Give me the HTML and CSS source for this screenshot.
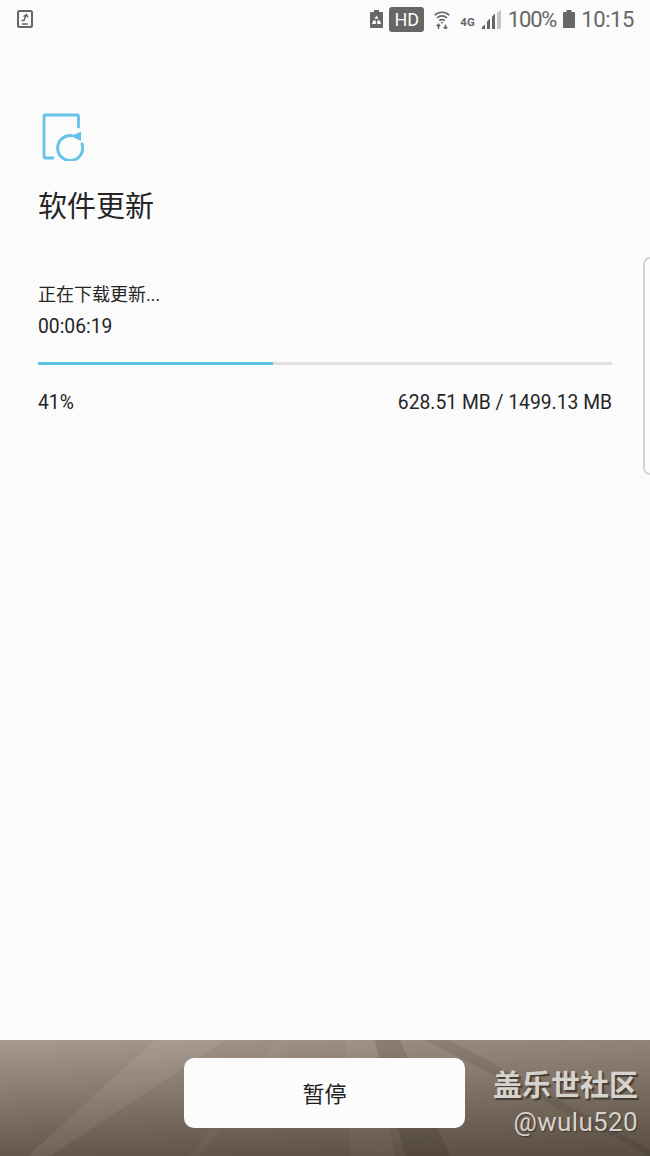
FILE: index.html
```html
<!DOCTYPE html>
<html lang="zh-CN">
<head>
  <meta charset="UTF-8">
  <title>软件更新</title>
  <link rel="stylesheet" href="styles.css">
</head>
<body>

<header class="status">
  <svg class="ic-phone" width="16" height="18" viewBox="0 0 16 18">
    <rect x="1" y="1" width="14" height="16" rx="1.5" fill="none" stroke="#666" stroke-width="2"/>
    <path d="M4.500 10.500h2.500L9 5M6.500 6.500L9.500 4.500l1.500 3" fill="none" stroke="#666" stroke-width="1.500"/>
    <path d="M5 14h6" stroke="#666" stroke-width="1.500"/>
  </svg>
  <div class="status-right">
    <svg width="13" height="18" viewBox="0 0 13 18">
      <path d="M4 0h5v2h3a1 1 0 0 1 1 1v14a1 1 0 0 1-1 1H1a1 1 0 0 1-1-1V3a1 1 0 0 1 1-1h3z" fill="#666"/>
      <path d="M6.500 5.500l2 3.200H4.500zM3.200 10.500h2.600v3.500H2zM9.800 10.500l1.200 3.500H7.200v-3.500z" fill="#fff"/>
    </svg>
    <span class="hd">HD</span>
    <svg class="ic-wifi" width="16" height="19" viewBox="0 0 16 19">
      <path d="M.7 5.200a10.500 10.500 0 0 1 14.600 0M3 8a7 7 0 0 1 10 0M5.300 10.700a3.800 3.800 0 0 1 5.400 0" fill="none" stroke="#666" stroke-width="1.700"/>
      <path d="M6.500 12h3L8 13.800z" fill="#666"/>
      <path d="M4.500 19v-4M2.800 16.300l1.700-2 1.700 2M11.500 14.500v4M9.800 17l1.700 2 1.700-2" fill="none" stroke="#666" stroke-width="1.400"/>
    </svg>
    <span class="net">4G</span>
    <svg class="ic-signal" width="19" height="19" viewBox="0 0 19 19">
      <path d="M0 19v-2l3-2.500V19zM5 19v-7.500l3-3V19zM10 19V6.500l3-3V19z" fill="#666"/>
      <path d="M15 19V2.500L19 0V19z" fill="#c4c4c4"/>
    </svg>
    <span class="pct">100%</span>
    <svg class="ic-batt" width="12" height="18" viewBox="0 0 12 18">
      <path d="M3.500 0h5v2H11a1 1 0 0 1 1 1v14a1 1 0 0 1-1 1H1a1 1 0 0 1-1-1V3a1 1 0 0 1 1-1h2.500z" fill="#666"/>
    </svg>
    <span class="clock">10:15</span>
  </div>
</header>

<main class="content">
  <svg class="update-icon" width="42" height="48" viewBox="0 0 42 48">
    <path d="M36.500 14V3a1 1 0 0 0-1-1H3a1 1 0 0 0-1 1v41a1 1 0 0 0 1 1h8" fill="none" stroke="#64c3e6" stroke-width="2.800" stroke-linecap="round"/>
    <path d="M30 22.700A12.500 12.500 0 1 0 40 31" fill="none" stroke="#64c3e6" stroke-width="3" stroke-linecap="round"/>
    <path d="M29 23l10-4.500v9.500z" fill="#64c3e6"/>
  </svg>
  <h1>软件更新</h1>

  <p class="state">正在下载更新...</p>
  <p class="timer">00:06:19</p>

  <div class="progress"><div class="progress-fill" style="width: 41%"></div></div>

  <div class="progress-info">
    <span>41%</span>
    <span>628.51 MB / 1499.13 MB</span>
  </div>
</main>

<div class="edge-handle"></div>

<footer class="bottom">
  <svg class="rays" width="650" height="116" viewBox="0 0 650 116">
    <polygon points="155,0 225,0 50,116 28,116" fill="#fff" opacity=".07"/>
    <polygon points="275,0 290,0 200,116 190,116" fill="#fff" opacity=".03"/>
    <polygon points="375,0 400,0 450,116 405,116" fill="#000" opacity=".1"/>
    <polygon points="425,0 450,0 650,110 650,116" fill="#000" opacity=".08"/>
    <polygon points="345,0 375,0 395,116 350,116" fill="#fff" opacity=".04"/>
  </svg>
  <button class="pause">暂停</button>
  <div class="watermark">
    <div class="wm-name">盖乐世社区</div>
    <div class="wm-user">@wulu520</div>
  </div>
</footer>

</body>
</html>
```

FILE: styles.css
```css
* {
  box-sizing: border-box;
}
html, body {
  height: 100%;
}
body {
  background: #FBFBFB;
  color: #252525;
  display: flex;
  flex-direction: column;
  font-family: "Roboto", "Noto Sans CJK SC", sans-serif;
  height: 1156px;
  margin: 0;
  overflow: hidden;
  position: relative;
}
svg {
  display: block;
  flex: none;
}

/* status bar */
.status {
  align-items: center;
  color: #666;
  display: flex;
  height: 38px;
  justify-content: space-between;
  padding: 0 16px 0 17px;
}
.status-right {
  align-items: center;
  display: flex;
}
.hd {
  background: #666;
  border-radius: 3px;
  color: #FBFBFB;
  font-size: 18px;
  height: 25px;
  line-height: 25px;
  margin: 0 10px 0 6px;
  text-align: center;
  width: 35px;
}
.net {
  align-self: flex-start;
  font-size: 11.5px;
  font-weight: 700;
  margin: 8px 0 0 10px;
}
.ic-signal {
  margin: 0 7px 0 7px;
}
.pct {
  font-size: 22px;
  letter-spacing: -1.2px;
}
.ic-batt {
  margin: 0 6px 0 7px;
}
.clock {
  font-size: 22px;
  letter-spacing: -.4px;
}

/* main */
.content {
  flex: 1;
  padding: 75px 38px 0;
}
.update-icon {
  margin-left: 4px;
}
h1 {
  font-size: 29px;
  font-weight: 400;
  line-height: 40px;
  margin: 26px 0 55px;
}
.state, .timer {
  font-size: 18px;
  margin: 0;
}
.state {
  line-height: 26px;
}
.timer {
  font-size: 19.3px;
  line-height: 26px;
  margin-top: 6px;
}
.progress {
  background: #E2E0DE;
  height: 3px;
  margin-top: 22px;
}
.progress-fill {
  background: #5CC1E3;
  height: 100%;
}
.progress-info {
  display: flex;
  font-size: 19.3px;
  justify-content: space-between;
  line-height: 26px;
  margin-top: 25px;
}
.edge-handle {
  border: 2px solid #D4D4D4;
  border-radius: 10px 0 0 10px;
  border-right: 0;
  height: 218px;
  position: absolute;
  right: 0;
  top: 257px;
  width: 7px;
}

/* bottom bar */
.bottom {
  align-items: flex-start;
  background: linear-gradient(90deg, rgba(40, 30, 20, 0), rgba(40, 30, 20, .18)), linear-gradient(#A89A8D, #64574D);
  display: flex;
  flex: none;
  height: 116px;
  justify-content: center;
  padding-top: 18px;
  position: relative;
}
.rays {
  left: 0;
  position: absolute;
  top: 0;
}
.pause {
  background: #FCFCFC;
  border: 0;
  border-radius: 10px;
  color: #1E1E1E;
  font-family: inherit;
  font-size: 22px;
  height: 70px;
  margin-right: 1px;
  padding-bottom: 3px;
  position: relative;
  width: 281px;
}
.watermark {
  color: #D6D2CE;
  position: absolute;
  right: 12px;
  text-align: right;
  top: 28px;
}
.wm-name {
  font-size: 29px;
  font-weight: 700;
  line-height: 36px;
  text-shadow: 2px 2px 1px rgba(50, 40, 30, .7);
}
.wm-user {
  font-size: 26px;
  letter-spacing: .35px;
  line-height: 36px;
  text-shadow: 1px 1px 1px rgba(50, 40, 30, .7);
}
```
